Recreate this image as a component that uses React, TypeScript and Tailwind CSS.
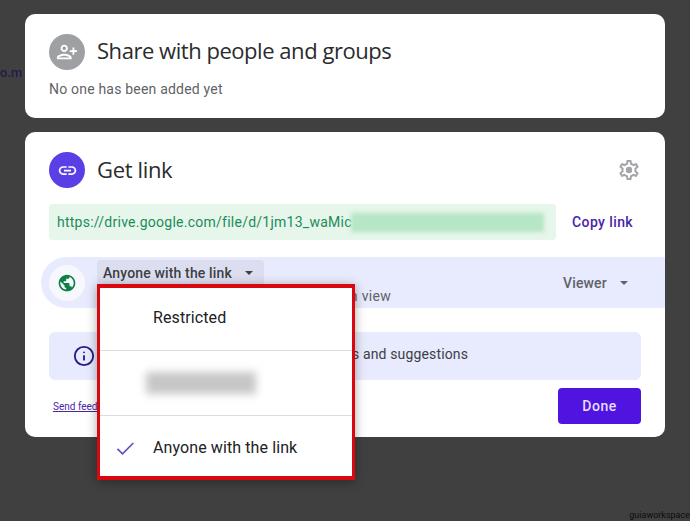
import React from 'react';
import { Info } from 'lucide-react';

const PERSON_ADD =
  'M15 12c2.21 0 4-1.79 4-4s-1.79-4-4-4-4 1.79-4 4 1.79 4 4 4zm0-6c1.1 0 2 .9 2 2s-.9 2-2 2-2-.9-2-2 .9-2 2-2zm0 8c-2.67 0-8 1.34-8 4v2h16v-2c0-2.66-5.33-4-8-4zm-6 4c.22-.72 3.31-2 6-2 2.7 0 5.8 1.29 6 2H9zm-3-3v-3h3v-2H6V7H4v3H1v2h3v3h2z';
const LINK =
  'M3.9 12c0-1.71 1.39-3.1 3.1-3.1h4V7H7c-2.76 0-5 2.24-5 5s2.24 5 5 5h4v-1.9H7c-1.71 0-3.1-1.39-3.1-3.1zM8 13h8v-2H8v2zm9-6h-4v1.9h4c1.71 0 3.1 1.39 3.1 3.1s-1.39 3.1-3.1 3.1h-4V17h4c2.76 0 5-2.24 5-5s-2.24-5-5-5z';
const GLOBE =
  'M12 2C6.48 2 2 6.48 2 12s4.48 10 10 10 10-4.48 10-10S17.52 2 12 2zm-1 17.93c-3.95-.49-7-3.85-7-7.93 0-.62.08-1.21.21-1.79L9 15v1c0 1.1.9 2 2 2v1.93zm6.9-2.54c-.26-.81-1-1.39-1.9-1.39h-1v-3c0-.55-.45-1-1-1H8v-2h2c.55 0 1-.45 1-1V7h2c1.1 0 2-.9 2-2v-.41c2.93 1.19 5 4.06 5 7.41 0 2.08-.8 3.97-2.1 5.39z';
const GEAR =
  'M19.43 12.98c.04-.32.07-.64.07-.98 0-.34-.03-.66-.07-.98l2.11-1.65c.19-.15.24-.42.12-.64l-2-3.46c-.09-.16-.26-.25-.44-.25-.06 0-.12.01-.17.03l-2.49 1c-.52-.4-1.08-.73-1.69-.98l-.38-2.65C14.46 2.18 14.25 2 14 2h-4c-.25 0-.46.18-.49.42l-.38 2.65c-.61.25-1.17.59-1.69.98l-2.49-1c-.06-.02-.12-.03-.18-.03-.17 0-.34.09-.43.25l-2 3.46c-.13.22-.07.49.12.64l2.11 1.65c-.04.32-.07.65-.07.98 0 .33.03.66.07.98l-2.11 1.65c-.19.15-.24.42-.12.64l2 3.46c.09.16.26.25.44.25.06 0 .12-.01.17-.03l2.49-1c.52.4 1.08.73 1.69.98l.38 2.65c.03.24.24.42.49.42h4c.25 0 .46-.18.49-.42l.38-2.65c.61-.25 1.17-.59 1.69-.98l2.49 1c.06.02.12.03.18.03.17 0 .34-.09.43-.25l2-3.46c.12-.22.07-.49-.12-.64l-2.11-1.65zm-1.98-1.71c.04.31.05.52.05.73 0 .21-.02.43-.05.73l-.14 1.13.89.7 1.08.84-.7 1.21-1.27-.51-1.04-.42-.9.68c-.43.32-.84.56-1.25.73l-1.06.43-.16 1.13-.2 1.35h-1.4l-.19-1.35-.16-1.13-1.06-.43c-.43-.18-.83-.41-1.23-.71l-.91-.7-1.06.43-1.27.51-.7-1.21 1.08-.84.89-.7-.14-1.13c-.03-.31-.05-.54-.05-.74s.02-.43.05-.73l.14-1.13-.89-.7-1.08-.84.7-1.21 1.27.51 1.04.42.9-.68c.43-.32.84-.56 1.25-.73l1.06-.43.16-1.13.2-1.35h1.39l.19 1.35.16 1.13 1.06.43c.43.18.83.41 1.23.71l.91.7 1.06-.43 1.27-.51.7 1.21-1.07.85-.89.7.14 1.13z';

function Caret({ className }: { className: string }) {
  return <span className={`w-0 h-0 border-x-[4px] border-x-transparent border-t-[4px] ${className}`} />;
}

function AccessMenu() {
  return (
    <div className="absolute left-[97px] top-[284px] w-[258px] h-[196px] border-[3px] border-t-[4px] border-b-[4px] border-[#d9080f] bg-white shadow-[0_2px_10px_rgba(0,0,0,0.35)] flex flex-col text-[#202124] text-[16px] tracking-[0.1px]">
      <div className="h-[63px] shrink-0 flex items-center pl-[53px] pb-[2px] border-b border-[#dadce0]">Restricted</div>
      <div className="h-[65px] shrink-0 flex items-center pl-[46px] border-b border-[#dadce0]">
        <div className="w-[110px] h-[22px] bg-[#c6c6c6] blur-[4px]" />
      </div>
      <div className="flex-1 flex items-center pt-[4px]">
        <svg className="w-[20px] h-[20px] ml-[15px] mr-[18px]" viewBox="0 0 24 24" fill="none" stroke="#5f4fc0" strokeWidth="2">
          <path d="M3 13l6 6L22 6" />
        </svg>
        <span>Anyone with the link</span>
      </div>
    </div>
  );
}

export default function App() {
  return (
    <div className="relative w-[690px] h-[521px] overflow-hidden bg-[#404040] px-[25px] pt-[14px] font-['Roboto',sans-serif]">
      <span className="absolute left-0 top-[63px] text-[13px] font-medium text-[#1f1c4a] blur-[0.5px]">o.m</span>

      <section className="relative h-[104px] bg-white rounded-[10px] pl-[24px] pt-[20px]">
        <div className="flex items-center gap-[12px]">
          <div className="w-[36px] h-[36px] rounded-full bg-[#9ea0a3] flex items-center justify-center">
            <svg className="w-[22px] h-[22px] -scale-x-100" viewBox="0 0 24 24" fill="white">
              <path d={PERSON_ADD} />
            </svg>
          </div>
          <h2 className="text-[22px] leading-[36px] -mt-[4px] text-[#2a2b2d] font-['Open_Sans',sans-serif] tracking-[-0.46px]">
            Share with people and groups
          </h2>
        </div>
        <p className="mt-[10px] text-[14px] leading-[18px] text-[#5f6368] tracking-[0.2px]">No one has been added yet</p>
      </section>

      <section className="mt-[14px] h-[305px] bg-white rounded-[10px] pt-[20px] pl-[24px]">
        <div className="flex items-center gap-[12px] pr-[24px]">
          <div className="w-[36px] h-[36px] rounded-full bg-[#5b3fe6] flex items-center justify-center">
            <svg className="w-[21px] h-[21px]" viewBox="0 0 24 24" fill="white">
              <path d={LINK} />
            </svg>
          </div>
          <h2 className="flex-1 text-[22px] leading-[36px] -mt-[3px] text-[#2a2b2d] font-['Open_Sans',sans-serif] tracking-[-0.35px]">
            Get link
          </h2>
          <svg className="w-[24px] h-[24px]" viewBox="0 0 24 24" fill="#a3a5a8">
            <path d={GEAR} />
            <circle cx="12" cy="12" r="3.2" />
          </svg>
        </div>

        <div className="mt-[16px] flex items-center">
          <div className="relative w-[507px] h-[36px] bg-[#e6f6ea] rounded-[4px] pl-[8px] flex items-center text-[14px] text-[#1c8c5a] tracking-[0.25px] overflow-hidden">
            <span className="whitespace-nowrap">https://drive.google.com/file/d/1jm13_waMic</span>
            <div className="absolute left-[302px] top-[9px] w-[193px] h-[19px] bg-[#b5e6c6] blur-[2px]" />
          </div>
          <span className="ml-[16px] text-[14px] font-medium text-[#4a25a8] tracking-[0.4px]">Copy link</span>
        </div>

        <div className="mt-[17px] -ml-[8px] h-[51px] bg-[#e8eafd] rounded-l-[26px] flex items-center pl-[8px]">
          <div className="w-[36px] h-[36px] rounded-full bg-[#f7f8fe] flex items-center justify-center">
            <svg className="w-[20px] h-[20px]" viewBox="0 0 24 24" fill="#0d8043">
              <path d={GLOBE} />
            </svg>
          </div>
          <div className="ml-[12px] w-[294px] self-start pt-[3px]">
            <div className="w-[167px] h-[25px] bg-[#dcdef0] rounded-[4px] flex items-center pl-[6px] pt-[1px] text-[14px] font-medium text-[#3c4043] tracking-[0.15px]">
              <span>Anyone with the link</span>
              <Caret className="ml-[13px] border-t-[#3c4043]" />
            </div>
            <p className="mt-[2px] text-[14px] leading-[18px] text-[#5f6368] tracking-[0.33px] whitespace-nowrap">
              Anyone on the internet with this link can view
            </p>
          </div>
          <span className="ml-[172px] pt-[2px] text-[14px] font-medium text-[#5f6368] tracking-[0.15px]">Viewer</span>
          <Caret className="ml-[13px] border-t-[#5f6368]" />
        </div>

        <div className="mt-[24px] w-[592px] h-[48px] bg-[#e8eafd] rounded-[6px] flex items-center pl-[24px]">
          <Info className="w-[22px] h-[22px] text-[#241a8a]" strokeWidth={2} />
          <span className="ml-[6px] text-[14px] text-[#3c4043] tracking-[0.15px] whitespace-nowrap relative -top-[2px]">
            Anyone with the link can view comments and suggestions
          </span>
        </div>

        <div className="mt-[8px] w-[592px] flex items-center justify-between">
          <span className="ml-[4px] text-[10px] underline text-[#4a25a8]">Send feedback to Google</span>
          <button className="w-[83px] h-[36px] bg-[#4f14e0] rounded-[4px] text-[14px] font-medium text-[#e8dcff] tracking-[0.5px]">
            Done
          </button>
        </div>
      </section>

      <AccessMenu />

      <span className="absolute right-0 bottom-0 text-[9px] leading-[12px] text-[#0c0c0c]">guiaworkspace</span>
    </div>
  );
}
